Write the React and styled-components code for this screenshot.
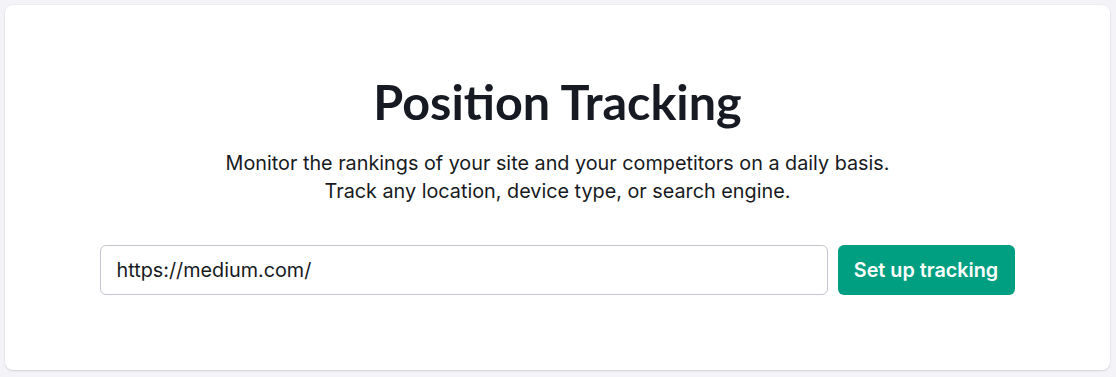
import React from "react";
import styled, { createGlobalStyle } from "styled-components";

const Global = createGlobalStyle`
  html, body { margin: 0; padding: 0; background: #f4f4f8; }
  body { font-family: Inter, "Noto Sans", sans-serif; }
  * { box-sizing: border-box; }
`;

const Page = styled.div`
  padding: 5px 6px 7px 5px;
`;

const Card = styled.section`
  background: #ffffff;
  border-radius: 8px;
  box-shadow: 0 1px 2px rgba(0, 0, 0, 0.12), 0 0 0 1px rgba(0, 0, 0, 0.02);
  height: 365px;
  display: flex;
  flex-direction: column;
  align-items: center;
  padding-top: 68px;
`;

const Title = styled.h1`
  margin: 0;
  font-family: Lato, "Noto Sans", sans-serif;
  font-weight: 700;
  font-size: 48.5px;
  line-height: 56px;
  color: #171a22;
`;

const Subtitle = styled.p`
  margin: 20px 0 0;
  font-size: 19.8px;
  line-height: 28px;
  color: #171a22;
  text-align: center;
`;

const Form = styled.form`
  margin-top: 40px;
  display: flex;
  gap: 10px;
  width: 915px;
  margin-left: -1px;
`;

const Input = styled.input`
  flex: 1;
  height: 50px;
  border: 1px solid #c4c7cf;
  border-radius: 6px;
  padding: 0 16px;
  font-family: Inter, sans-serif;
  font-size: 19.8px;
  color: #171a22;
  outline: none;
  background: #fff;
`;

const Button = styled.button`
  height: 50px;
  width: 177px;
  border: none;
  border-radius: 6px;
  background: #009f81;
  color: #fff;
  font-family: Inter, sans-serif;
  font-weight: 600;
  font-size: 19.8px;
  cursor: pointer;
`;

export default function App() {
  return (
    <>
      <Global />
      <Page>
        <Card>
          <Title>Position Tracking</Title>
          <Subtitle>
            Monitor the rankings of your site and your competitors on a daily basis.
            <br />
            Track any location, device type, or search engine.
          </Subtitle>
          <Form onSubmit={(e) => e.preventDefault()}>
            <Input defaultValue="https://medium.com/" />
            <Button type="submit">Set up tracking</Button>
          </Form>
        </Card>
      </Page>
    </>
  );
}
